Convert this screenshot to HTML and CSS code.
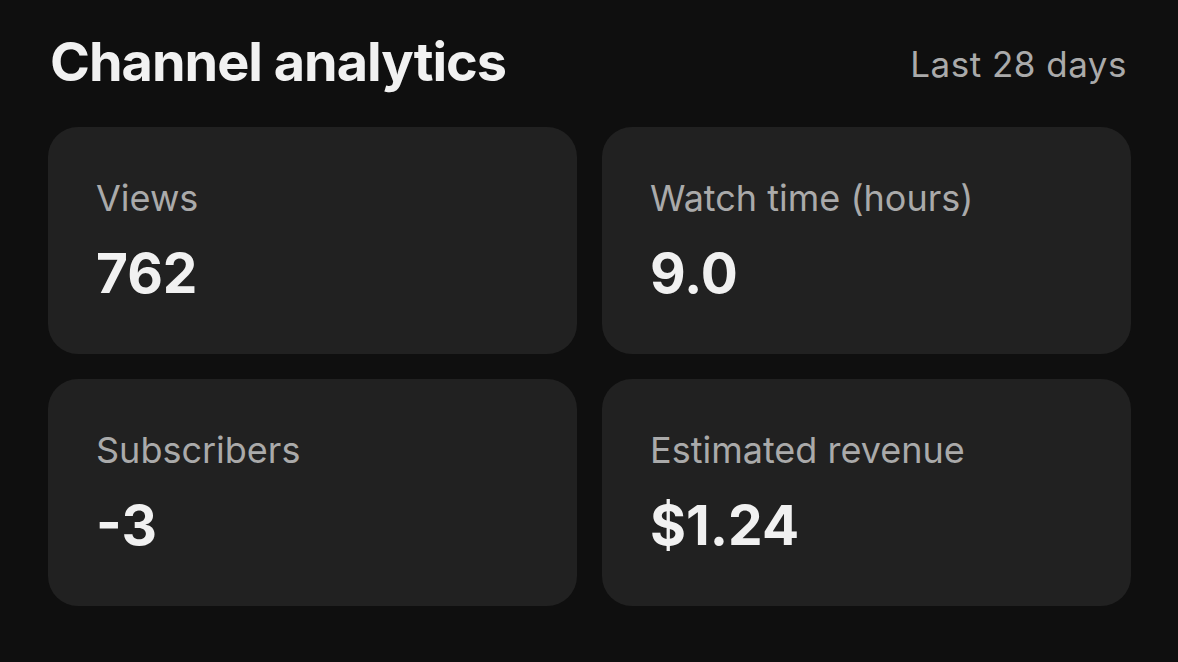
FILE: index.html
```html
<!DOCTYPE html>
<html lang="en">
<head>
<meta charset="utf-8">
<title>Channel analytics</title>
<link rel="stylesheet" href="styles.css">
</head>
<body>
<main class="page">
  <header class="header">
    <h1 class="title">Channel analytics</h1>
    <span class="range">Last 28 days</span>
  </header>
  <section class="grid">
    <div class="card">
      <div class="label">Views</div>
      <div class="value">762</div>
    </div>
    <div class="card">
      <div class="label">Watch time (hours)</div>
      <div class="value">9.0</div>
    </div>
    <div class="card">
      <div class="label">Subscribers</div>
      <div class="value">-3</div>
    </div>
    <div class="card">
      <div class="label">Estimated revenue</div>
      <div class="value">$1.24</div>
    </div>
  </section>
</main>
</body>
</html>
```

FILE: styles.css
```css
html, body {
  margin: 0;
  padding: 0;
  background: #0f0f0f;
}
body {
  font-family: Inter, "Noto Sans", "Liberation Sans", sans-serif;
  color: #f1f1f1;
  width: 1178px;
  height: 662px;
  overflow: hidden;
}
.page {
  padding: 29px 47px 0 48px;
}
.header {
  display: flex;
  justify-content: space-between;
  align-items: flex-start;
  padding-left: 2px;
  padding-right: 4px;
}
.title {
  margin: 0;
  font-size: 54px;
  line-height: 66px;
  font-weight: 700;
  letter-spacing: -1px;
  color: #f1f1f1;
}
.range {
  margin-top: 13px;
  font-size: 35px;
  line-height: 44px;
  letter-spacing: 0.5px;
  color: #aaaaaa;
  font-weight: 400;
}
.grid {
  margin-top: 32px;
  display: grid;
  grid-template-columns: 1fr 1fr;
  gap: 25px;
}
.card {
  background: #212121;
  border-radius: 30px;
  height: 227px;
  box-sizing: border-box;
  padding: 49px 47px 0 48px;
}
.label {
  font-size: 36px;
  line-height: 44px;
  color: #aaaaaa;
}
.value {
  margin-top: 20px;
  font-size: 55px;
  line-height: 66px;
  font-weight: 700;
  color: #f1f1f1;
}
```
